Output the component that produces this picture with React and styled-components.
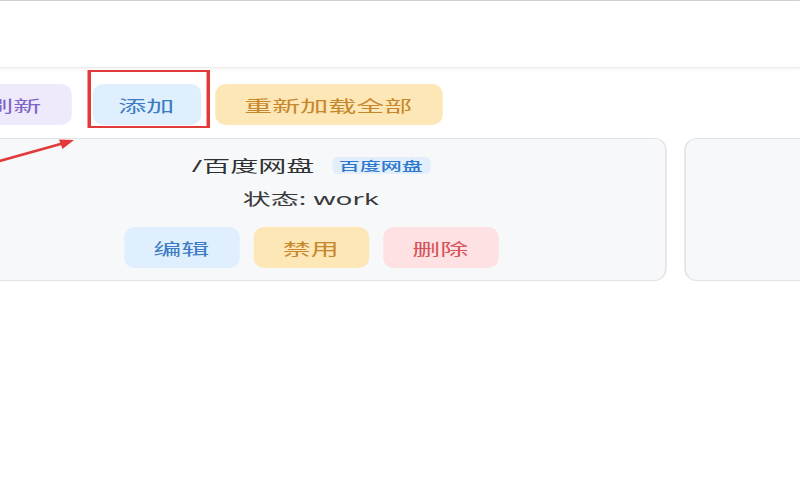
import React from "react";
import styled, { createGlobalStyle, css } from "styled-components";

// the screenshot is stretched sideways, so the page is laid out narrow and widened
const STRETCH = 1.75;

const GlobalStyle = createGlobalStyle`
  html, body {
    margin: 0;
    padding: 0;
    background: #fff;
    overflow: hidden;
  }
  body {
    font-family: "Noto Sans", "Noto Sans CJK SC", sans-serif;
  }
`;

const tones = {
  purple: css`
    background: #eeeafc;
    color: #7f63c6;
  `,
  blue: css`
    background: #dfeffd;
    color: #3b7cc4;
  `,
  yellow: css`
    background: #fde7b6;
    color: #c7872d;
  `,
  red: css`
    background: #fde1e3;
    color: #d8535a;
  `,
};

function App() {
  return (
    <>
      <GlobalStyle />
      <Page>
        <Stretch>
          <Header />
          <Main>
            <Toolbar>
              <Button tone="purple">刷新</Button>
              <Marked>
                <Button tone="blue" $pad={15}>添加</Button>
                <MarkBox />
              </Marked>
              <Button tone="yellow">重新加载全部</Button>
            </Toolbar>

            <CardGrid>
              <Card>
                <TitleRow>
                  <Title>/百度网盘</Title>
                  <Badge>百度网盘</Badge>
                </TitleRow>
                <Status>状态: work</Status>
                <CardActions>
                  <Button tone="blue">编辑</Button>
                  <Button tone="yellow">禁用</Button>
                  <Button tone="red">删除</Button>
                </CardActions>
              </Card>
              <Card />
            </CardGrid>
          </Main>
        </Stretch>

        <Arrow viewBox="0 0 100 40" width="100" height="40">
          <line x1="-4" y1="32" x2="66" y2="12.5" stroke="#e23a3a" strokeWidth="2.6" strokeLinecap="round" />
          <polygon points="74,10 59,9.5 62.5,19" fill="#e23a3a" />
        </Arrow>
      </Page>
    </>
  );
}

// css styles
const Page = styled.div`
  position: relative;
  width: 800px;
  height: 500px;
  overflow: hidden;
`;

const Stretch = styled.div`
  width: ${800 / STRETCH}px;
  transform: scaleX(${STRETCH});
  transform-origin: 0 0;
`;

const Header = styled.div`
  height: 66px;
  background: #fff;
  border-top: 1px solid #cfcfcf;
  border-bottom: 1px solid #ececec;
  box-shadow: 0 1px 3px rgba(0, 0, 0, 0.05);
`;

const Main = styled.div`
  margin-left: -25.4px;
  padding-top: 16px;
`;

const Toolbar = styled.div`
  display: flex;
  align-items: center;
  gap: 8px;
`;

const Button = styled.div`
  height: 41px;
  padding: 0 ${(p) => p.$pad || 17}px;
  display: flex;
  align-items: center;
  justify-content: center;
  border-radius: 6px / 10px;
  font-family: "Noto Sans CJK SC", sans-serif;
  font-size: 16px;
  white-space: nowrap;
  ${(p) => tones[p.tone]}
`;

const Marked = styled.div`
  position: relative;
  margin-left: 4px;
`;

const MarkBox = styled.div`
  position: absolute;
  left: -3px;
  right: -5px;
  top: -14px;
  bottom: -3px;
  border: 2px solid #e23a3a;
  pointer-events: none;
`;

const CardGrid = styled.div`
  display: grid;
  grid-template-columns: 406px 406px;
  gap: 10px;
  margin-top: 13px;
`;

const Card = styled.div`
  height: 143px;
  box-sizing: border-box;
  padding: 14px 0 12px;
  background: #f7f8fa;
  border: 1px solid #e2e4e8;
  border-radius: 7px / 12px;
  display: flex;
  flex-direction: column;
  align-items: center;
`;

const TitleRow = styled.div`
  display: flex;
  align-items: center;
  gap: 10px;
  height: 24px;
`;

const Title = styled.span`
  font-family: "Noto Sans", "Noto Sans CJK SC", sans-serif;
  font-size: 16px;
  color: #303133;
`;

const Badge = styled.span`
  height: 17px;
  line-height: 17px;
  padding: 0 4px;
  border-radius: 3px / 5px;
  background: #e2eefb;
  color: #2d78cf;
  font-family: "Noto Sans CJK SC", sans-serif;
  font-size: 12px;
  font-weight: 500;
`;

const Status = styled.div`
  margin-top: 10px;
  line-height: 24px;
  font-family: "Noto Sans", "Noto Sans CJK SC", sans-serif;
  font-size: 16px;
  color: #3a3a3a;
`;

const CardActions = styled.div`
  margin-top: 16px;
  display: flex;
  gap: 8px;
`;

const Arrow = styled.svg`
  position: absolute;
  left: 0;
  top: 130px;
  overflow: visible;
  pointer-events: none;
`;

export default App;
